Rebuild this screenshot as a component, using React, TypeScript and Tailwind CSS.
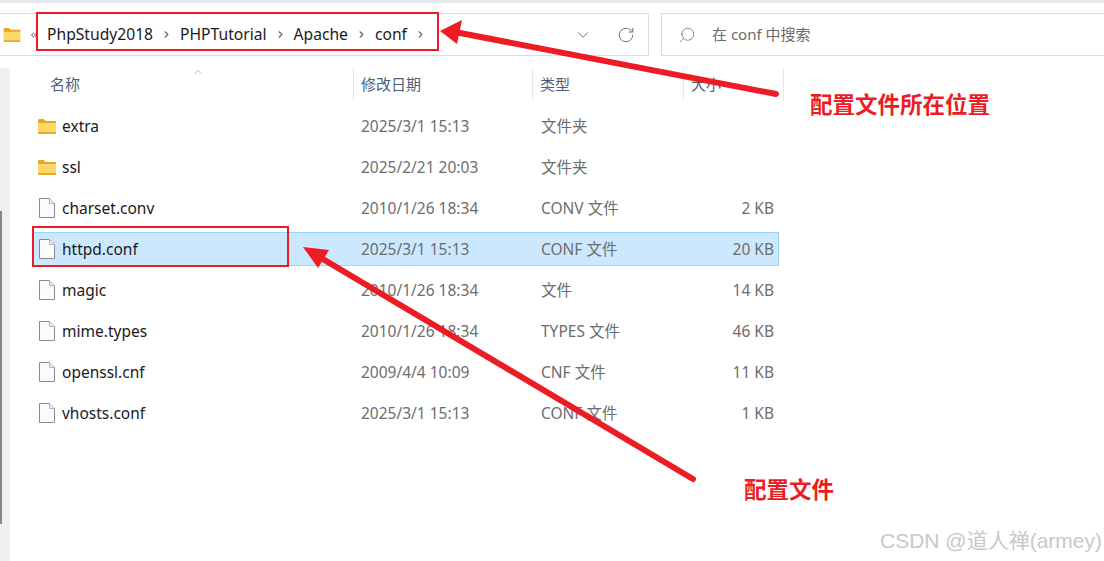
import { ChevronDown, ChevronRight, ChevronUp, ChevronsLeft, RotateCw, Search } from "lucide-react";

const files = [
  { name: "extra", date: "2025/3/1 15:13", type: "文件夹", size: "", folder: true },
  { name: "ssl", date: "2025/2/21 20:03", type: "文件夹", size: "", folder: true },
  { name: "charset.conv", date: "2010/1/26 18:34", type: "CONV 文件", size: "2 KB" },
  { name: "httpd.conf", date: "2025/3/1 15:13", type: "CONF 文件", size: "20 KB", selected: true },
  { name: "magic", date: "2010/1/26 18:34", type: "文件", size: "14 KB" },
  { name: "mime.types", date: "2010/1/26 18:34", type: "TYPES 文件", size: "46 KB" },
  { name: "openssl.cnf", date: "2009/4/4 10:09", type: "CNF 文件", size: "11 KB" },
  { name: "vhosts.conf", date: "2025/3/1 15:13", type: "CONF 文件", size: "1 KB" },
];

const crumbs = ["PhpStudy2018", "PHPTutorial", "Apache", "conf"];

const FolderIcon = ({ className }: { className?: string }) => (
  <svg viewBox="0 0 18 15" className={className}>
    <path d="M0 1.5C0 .7.6 0 1.3 0h4.4l2 2H17c.6 0 1 .4 1 1v2H0z" fill="#e8a81e" />
    <path d="M0 4h18v9.500c0 .8-.6 1.500-1.300 1.500H1.300C.6 15 0 14.300 0 13.500z" fill="#fcd76a" />
    <path d="M0 13h18v.5c0 .8-.6 1.500-1.300 1.500H1.300C.6 15 0 14.300 0 13.500z" fill="#e9ab24" />
  </svg>
);

const FileIcon = () => (
  <svg viewBox="0 0 16 20" className="w-4 h-5 shrink-0">
    <path d="M.5.5h10l5 5v14H.5z" fill="#fbfbfb" stroke="#8a8a8a" />
    <path d="M10.500.5v5h5" fill="#eeeeee" stroke="#b5b5b5" />
  </svg>
);

const Header = ({ label, className }: { label: string; className: string }) => (
  <div className={`h-8 flex items-center border-r border-[#e3e5e8] text-[#4c607a] ${className}`}>{label}</div>
);

const App = () => {
  return (
    <div className="relative w-[1104px] h-[561px] overflow-hidden bg-white flex flex-col text-[15.500px] font-['Noto_Sans','Noto_Sans_CJK_SC',sans-serif]">
      <div className="h-[3px] bg-[#e6e8ee]" />

      <div className="flex h-[43px] mt-[10px]">
        <div className="w-[649px] flex items-center border border-l-0 border-[#dcdcdc] text-[#1a1a1a]">
          <FolderIcon className="w-[18px] h-[14px] ml-[3px]" />
          <ChevronsLeft size={10} strokeWidth={2.5} className="ml-[8px] text-[#777777]" />
          <div className="flex items-center ml-[8px] text-[15.650px] pt-[1px]">
            {crumbs.map((c) => (
              <div key={c} className="flex items-center">
                <span>{c}</span>
                <ChevronRight size={11} strokeWidth={2.5} className="mx-[8px] text-[#666666]" />
              </div>
            ))}
          </div>
          <div className="ml-auto flex items-center gap-[25px] pr-[13px] text-[#666666]">
            <ChevronDown size={18} strokeWidth={1.25} />
            <RotateCw size={18} strokeWidth={1.25} />
          </div>
        </div>
        <div className="ml-[12px] flex-1 flex items-center border border-r-0 border-[#dcdcdc] text-[#6b6b6b] text-[15px]">
          <Search size={18} strokeWidth={1} className="ml-[16px] -scale-x-100" />
          <span className="ml-[16px]">在 conf 中搜索</span>
        </div>
      </div>

      <div className="flex flex-1 mt-[12px]">
        <div className="w-[9px] bg-[#f0f0f0] relative">
          <div className="absolute left-0 top-[143px] h-[313px] w-[2px] bg-[#888888]" />
        </div>
        <div className="flex-1 border-l border-[#f3f3f3] pl-[22px] relative">
          <ChevronUp size={12} strokeWidth={1} className="absolute left-[182px] top-[-2px] text-[#777777]" />
          <div className="flex text-[15px]">
            <Header label="名称" className="w-[322px] pl-[18px]" />
            <Header label="修改日期" className="w-[179px] pl-[7px]" />
            <Header label="类型" className="w-[151px] pl-[7px]" />
            <Header label="大小" className="w-[100px] pl-[7px]" />
          </div>
          <div className="mt-[9px] flex flex-col gap-[7px]">
            {files.map((f) => (
              <div
                key={f.name}
                className={`w-[747px] h-[34px] flex items-center border ${
                  f.selected ? "bg-[#cce8ff] border-[#99d1ff]" : "border-transparent"
                }`}
              >
                <div className="w-[23px] ml-[6px] flex shrink-0">
                  {f.folder ? <FolderIcon className="w-[18px] h-[15px] -ml-[1px]" /> : <FileIcon />}
                </div>
                <div className="w-[299px] shrink-0 pt-[2px] text-[#1a1a1a]">{f.name}</div>
                <div className="w-[180px] shrink-0 pt-[2px] text-[#6d6d6d]">{f.date}</div>
                <div className="w-[150px] shrink-0 pt-[2px] text-[#6d6d6d]">{f.type}</div>
                <div className="w-[83px] shrink-0 pt-[2px] text-right text-[#6d6d6d]">{f.size}</div>
              </div>
            ))}
          </div>
        </div>
      </div>

      {/* annotations drawn on top of the screenshot */}
      <div className="absolute left-[36px] top-[12px] w-[403px] h-[39px] border-2 border-[#ed1c24]" />
      <div className="absolute left-[32px] top-[226px] w-[257px] h-[41px] border-2 border-[#ed1c24]" />
      <svg className="absolute inset-0 pointer-events-none" width="1104" height="561" viewBox="0 0 1104 561">
        <path d="M776 94 455 32" stroke="#ed1c24" strokeWidth="6" strokeLinecap="round" />
        <path d="M440 31 462 20 457 44z" fill="#ed1c24" />
        <path d="M693 479 316 255" stroke="#ed1c24" strokeWidth="6" strokeLinecap="round" />
        <path d="M303 247 329 250 318 268z" fill="#ed1c24" />
      </svg>
      <div className="absolute left-[810px] top-[90px] text-[22.500px] leading-[30px] font-bold text-[#ed1c24]">配置文件所在位置</div>
      <div className="absolute left-[744px] top-[475px] text-[22.500px] leading-[30px] font-bold text-[#ed1c24]">配置文件</div>
      <div className="absolute left-[880px] top-[527px] text-[21px] leading-[28px] text-[#c8c8c8] font-['Liberation_Sans','Noto_Sans_CJK_SC',sans-serif]">CSDN @道人禅(armey)</div>
    </div>
  );
};

export default App;
